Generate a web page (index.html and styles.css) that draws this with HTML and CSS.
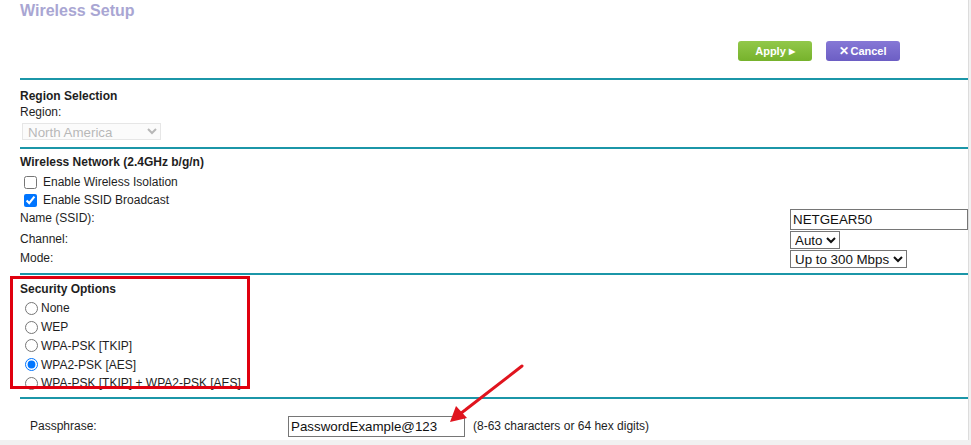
FILE: index.html
```html
<!DOCTYPE html>
<html>
<head>
<meta charset="utf-8">
<link rel="stylesheet" href="styles.css">
</head>
<body>
<div class="frame">
  <h1 class="title">Wireless Setup</h1>
  <div class="actions">
    <button class="btn btn-apply">Apply <span class="tri">&#9654;</span></button>
    <button class="btn btn-cancel"><span class="x">&#10005;</span>Cancel</button>
  </div>
  <div class="rule"></div>

  <section class="sec sec-region">
    <div class="head">Region Selection</div>
    <div class="line">Region:</div>
    <select class="sel-region" disabled><option>North America</option></select>
  </section>
  <div class="rule"></div>

  <section class="sec sec-wireless">
    <div class="head">Wireless Network (2.4GHz b/g/n)</div>
    <label class="check"><input type="checkbox">Enable Wireless Isolation</label>
    <label class="check"><input type="checkbox" checked>Enable SSID Broadcast</label>
    <div class="grid">
      <div class="lbl lbl-name">Name (SSID):</div>
      <div><input class="txt txt-ssid" type="text" value="NETGEAR50"></div>
      <div class="lbl">Channel:</div>
      <div><select class="sel"><option>Auto</option></select></div>
      <div class="lbl">Mode:</div>
      <div><select class="sel"><option>Up to 300 Mbps</option></select></div>
    </div>
  </section>
  <div class="rule"></div>

  <section class="sec sec-security">
    <div class="head">Security Options</div>
    <div class="radios">
      <label class="radio"><input type="radio" name="sec">None</label>
      <label class="radio"><input type="radio" name="sec">WEP</label>
      <label class="radio"><input type="radio" name="sec">WPA-PSK [TKIP]</label>
      <label class="radio"><input type="radio" name="sec" checked>WPA2-PSK [AES]</label>
      <label class="radio"><input type="radio" name="sec">WPA-PSK [TKIP] + WPA2-PSK [AES]</label>
    </div>
  </section>
  <div class="rule"></div>

  <section class="sec sec-pass">
    <div class="pass-lbl">Passphrase:</div>
    <input class="txt txt-pass" type="text" value="PasswordExample@123">
    <span class="hint">(8-63 characters or 64 hex digits)</span>
  </section>

  <div class="highlight"></div>
  <svg class="arrow" width="120" height="80" viewBox="0 0 120 80">
    <line x1="100" y1="6" x2="38" y2="54" stroke="#e0141e" stroke-width="3" stroke-linecap="round"/>
    <polygon points="28,62 34,46 45,58" fill="#e0141e"/>
  </svg>
</div>
</body>
</html>
```
FILE: styles.css
```css
html, body {
  margin: 0;
  padding: 0;
}
body {
  background: #f1f1f1;
  font-family: "Liberation Sans", Arial, sans-serif;
  font-size: 12px;
  color: #1e1e1e;
  width: 971px;
  height: 445px;
  overflow: hidden;
}
.frame {
  position: relative;
  box-sizing: border-box;
  width: 969px;
  height: 440px;
  padding-left: 20px;
  background: #fff;
  border-right: 1px solid #dcdcdc;
}
.title {
  margin: 0;
  padding-top: 1px;
  font-size: 16px;
  line-height: 20px;
  font-weight: bold;
  color: #a9a6d3;
}
.actions {
  display: flex;
  justify-content: flex-end;
  gap: 14px;
  margin-top: 20px;
  margin-bottom: 17px;
  padding-right: 68px;
  height: 20px;
}
.btn {
  width: 74px;
  height: 20px;
  border: none;
  border-radius: 3px;
  color: #fff;
  font-family: "Liberation Sans", Arial, sans-serif;
  font-size: 11px;
  font-weight: bold;
  padding: 0;
  display: flex;
  align-items: center;
  justify-content: center;
}
.btn-apply {
  background: linear-gradient(#92c84a, #76b22c);
}
.btn-apply .tri {
  font-size: 8px;
  margin-left: 3px;
}
.btn-cancel {
  background: linear-gradient(#8678d6, #6c5ec4);
}
.btn-cancel .x {
  font-size: 12px;
  font-weight: bold;
  margin-right: 1px;
}
.rule {
  height: 2px;
  background: #1b96a8;
}
.sec-region {
  padding-top: 8px;
  padding-bottom: 7px;
}
.head {
  font-weight: bold;
  line-height: 16px;
}
.line {
  line-height: 16px;
}
.sel-region {
  display: block;
  margin: 3px 0 0 2px;
  width: 139px;
  height: 17px;
  font-family: "Liberation Sans", Arial, sans-serif;
  font-size: 13.33px;
  color: #9a9a9a;
  border: 1px solid #dcdcdc;
  background: #fafafa;
  padding: 0 1px;
}
.sec-wireless {
  padding-top: 5px;
  padding-bottom: 5px;
}
.check {
  display: flex;
  align-items: center;
  height: 18px;
}
.sec-wireless .head {
  margin-bottom: 3px;
}
.check input {
  width: 13px;
  height: 13px;
  margin: 0 6px 0 4px;
}
.grid {
  display: grid;
  grid-template-columns: 770px 1fr;
  row-gap: 1px;
}
.lbl {
  line-height: 17px;
}
.lbl-name {
  line-height: 18px;
}
.txt {
  box-sizing: border-box;
  font-family: "Liberation Sans", Arial, sans-serif;
  font-size: 13.33px;
  color: #111;
  border: 1px solid #767676;
  padding: 1px 2px;
  margin: 0;
  height: 21px;
}
.txt-ssid {
  width: 178px;
  display: block;
}
.sel {
  font-family: "Liberation Sans", Arial, sans-serif;
  font-size: 13.33px;
  color: #111;
  height: 18px;
  padding: 0;
  margin: 0;
  border: 1px solid #767676;
  border-radius: 0;
  background: #fff;
}
.sec-security {
  padding-top: 6px;
  padding-bottom: 4px;
}
.radios {
  margin-top: 2px;
}
.radio {
  display: flex;
  align-items: center;
  height: 18.75px;
}
.radio input {
  width: 13px;
  height: 13px;
  margin: 0 3px 0 5px;
}
.sec-pass {
  display: flex;
  align-items: center;
  margin-top: 17px;
  height: 21px;
}
.pass-lbl {
  box-sizing: border-box;
  width: 268px;
  padding-left: 10px;
}
.txt-pass {
  width: 177px;
}
.hint {
  margin-left: 8px;
  font-size: 12px;
}
.highlight {
  position: absolute;
  left: 10px;
  top: 276px;
  width: 234px;
  height: 107px;
  border: 3px solid #e0000f;
}
.arrow {
  position: absolute;
  left: 422px;
  top: 360px;
}
```
